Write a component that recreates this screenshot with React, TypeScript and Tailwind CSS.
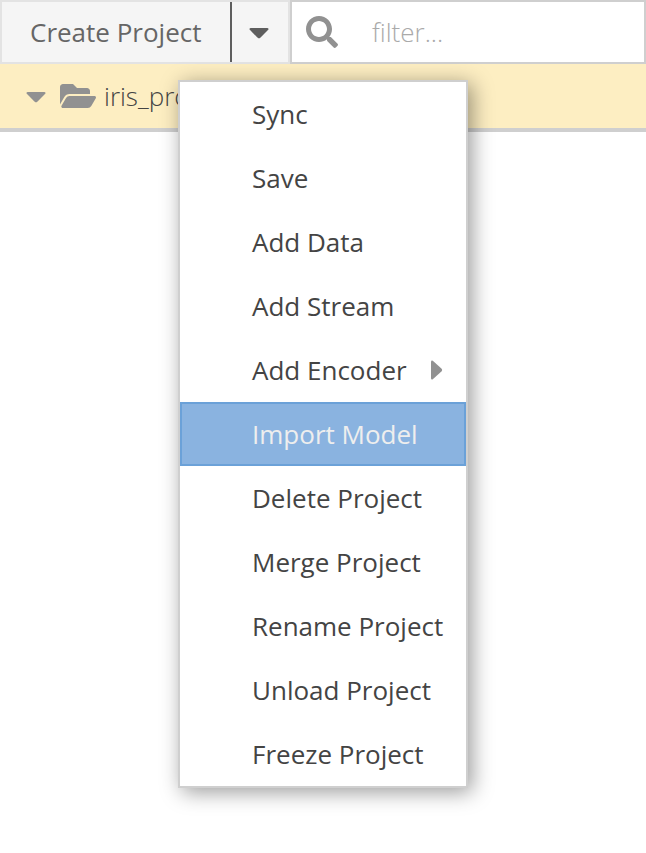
import React from "react";

const items = ["Sync", "Save", "Add Data", "Add Stream", "Add Encoder", "Import Model", "Delete Project", "Merge Project", "Rename Project", "Unload Project", "Freeze Project"];

function CaretDown({ className }: { className: string }) {
  return (
    <svg className={className} width="20" height="12" viewBox="0 0 20 12" fill="currentColor">
      <path d="M1.8 0h16.400q1.900.2 1 1.800l-7.600 7.800q-1.600 1.600-3.200 0L.8 1.800Q-.1.200 1.800 0Z" />
    </svg>
  );
}

export default function App() {
  return (
    <div className="relative h-[853px] w-[646px] overflow-hidden bg-white font-['Open_Sans',sans-serif] text-[26px]">
      <header className="flex h-16">
        <div className="flex w-[290px] border-2 border-[#e3e3e3] bg-[#f5f5f5]">
          <button className="flex w-[228px] items-center pl-7 text-[#666]">Create Project</button>
          <button className="flex flex-1 items-center border-l-2 border-[#5e5e5e] pl-[17px]">
            <CaretDown className="mt-1 text-[#5e5e5e]" />
          </button>
        </div>
        <div className="flex flex-1 items-center border-2 border-[#cfcfcf] pl-[14px] font-light text-[#aaa]">
          <svg width="32" height="32" viewBox="0 0 512 512" fill="#919191"><path d="M505 442.700 405.300 343c-4.500-4.500-10.600-7-17-7H372c27.600-35.300 44-79.700 44-128C416 93.100 322.900 0 208 0S0 93.100 0 208s93.100 208 208 208c48.300 0 92.700-16.400 128-44v16.300c0 6.400 2.500 12.500 7 17l99.700 99.700c9.400 9.400 24.600 9.400 33.900 0l28.300-28.300c9.400-9.400 9.400-24.600.1-34zM208 336c-70.700 0-128-57.200-128-128 0-70.700 57.200-128 128-128 70.700 0 128 57.200 128 128 0 70.700-57.200 128-128 128z" /></svg>
          <span className="ml-[34px]">filter...</span>
        </div>
      </header>
      <div className="flex h-[68px] items-center border-b-4 border-[#cfcfcf] bg-[#fdeec2] pl-[26px] text-[#444]">
        <CaretDown className="mt-1 text-[#919191]" />
        <svg className="ml-[14px]" width="36" height="32" viewBox="0 0 576 512" fill="#919191"><path d="M572.694 292.093 500.270 416.248A63.997 63.997 0 0 1 444.989 448H45.025c-18.523 0-30.064-20.093-20.731-36.093l72.424-124.155A64 64 0 0 1 152 256h399.964c18.523 0 30.064 20.093 20.730 36.093zM152 224h328v-48c0-26.510-21.490-48-48-48H272l-64-64H48C21.490 64 0 85.490 0 112v278.046l69.077-118.418C86.214 242.250 117.989 224 152 224z" /></svg>
        <span className="ml-2 font-light">iris_project</span>
      </div>
      <ul className="absolute left-[178px] top-20 w-[290px] border-2 border-[#cfcfcf] bg-white text-[#444] shadow-[4px_4px_20px_rgba(0,0,0,0.4)]">
        {items.map((item) => (
          <li key={item} className={item === "Import Model" ? "flex h-16 items-center border-2 border-[#6ba1d8] bg-[#8ab3e0] pl-[70px] text-[#eee]" : "flex h-16 items-center pl-[72px]"}>
            <span className="whitespace-nowrap">{item}</span>
            {item === "Add Encoder" && <svg className="ml-6" width="12" height="20" viewBox="0 0 12 20" fill="#919191"><path d="M0 1.800v16.400q.2 1.900 1.800 1l8.600-7.700q1.400-1.500 0-3L1.800.8Q.2-.1 0 1.800Z" /></svg>}
          </li>
        ))}
      </ul>
    </div>
  );
}
